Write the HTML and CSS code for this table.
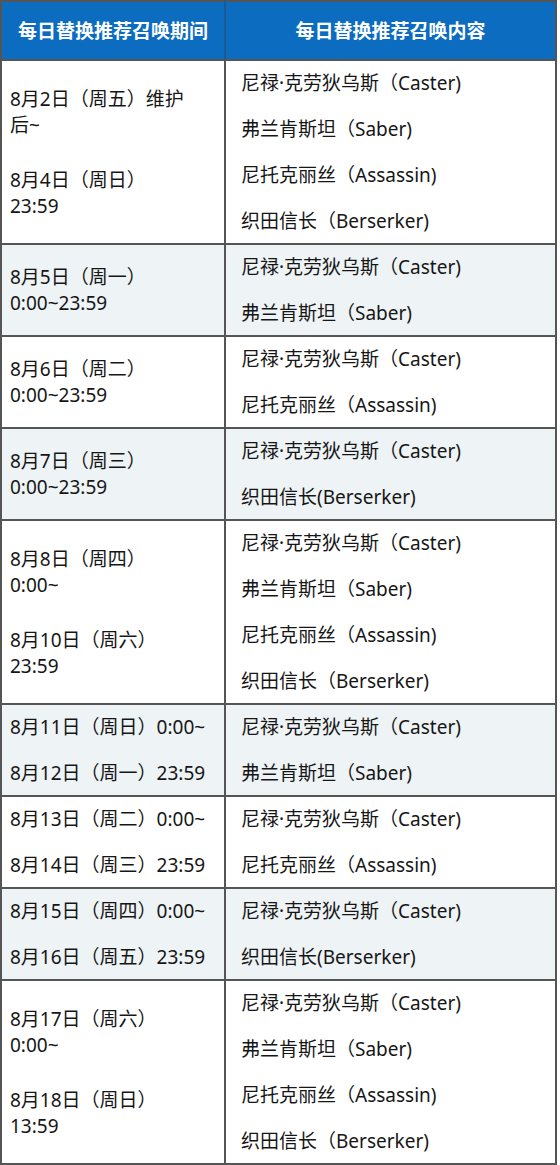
FILE: index.html
```html
<!DOCTYPE html>
<html lang="zh-CN">
<head>
<meta charset="utf-8">
<title>每日替换推荐召唤</title>
<link rel="stylesheet" href="styles.css">
</head>
<body>
<table class="schedule">
  <colgroup><col class="col-date"><col class="col-content"></colgroup>
  <thead>
    <tr><th>每日替换推荐召唤期间</th><th>每日替换推荐召唤内容</th></tr>
  </thead>
  <tbody>
    <tr>
      <td class="date"><p>8月2日（周五）维护<br>后~</p><p class="gap-lg">8月4日（周日）<br>23:59</p></td>
      <td class="items"><p>尼禄·克劳狄乌斯（Caster)</p><p>弗兰肯斯坦（Saber)</p><p>尼托克丽丝（Assassin)</p><p>织田信长（Berserker)</p></td>
    </tr>
    <tr class="alt">
      <td class="date"><p>8月5日（周一）<br>0:00~23:59</p></td>
      <td class="items"><p>尼禄·克劳狄乌斯（Caster)</p><p>弗兰肯斯坦（Saber)</p></td>
    </tr>
    <tr>
      <td class="date"><p>8月6日（周二）<br>0:00~23:59</p></td>
      <td class="items"><p>尼禄·克劳狄乌斯（Caster)</p><p>尼托克丽丝（Assassin)</p></td>
    </tr>
    <tr class="alt">
      <td class="date"><p>8月7日（周三）<br>0:00~23:59</p></td>
      <td class="items"><p>尼禄·克劳狄乌斯（Caster)</p><p>织田信长(Berserker)</p></td>
    </tr>
    <tr>
      <td class="date"><p>8月8日（周四）<br>0:00~</p><p class="gap-lg">8月10日（周六）<br>23:59</p></td>
      <td class="items"><p>尼禄·克劳狄乌斯（Caster)</p><p>弗兰肯斯坦（Saber)</p><p>尼托克丽丝（Assassin)</p><p>织田信长（Berserker)</p></td>
    </tr>
    <tr class="alt">
      <td class="date"><p>8月11日（周日）0:00~</p><p>8月12日（周一）23:59</p></td>
      <td class="items"><p>尼禄·克劳狄乌斯（Caster)</p><p>弗兰肯斯坦（Saber)</p></td>
    </tr>
    <tr>
      <td class="date"><p>8月13日（周二）0:00~</p><p>8月14日（周三）23:59</p></td>
      <td class="items"><p>尼禄·克劳狄乌斯（Caster)</p><p>尼托克丽丝（Assassin)</p></td>
    </tr>
    <tr class="alt">
      <td class="date"><p>8月15日（周四）0:00~</p><p>8月16日（周五）23:59</p></td>
      <td class="items"><p>尼禄·克劳狄乌斯（Caster)</p><p>织田信长(Berserker)</p></td>
    </tr>
    <tr>
      <td class="date"><p>8月17日（周六）<br>0:00~</p><p class="gap-lg">8月18日（周日）<br>13:59</p></td>
      <td class="items"><p>尼禄·克劳狄乌斯（Caster)</p><p>弗兰肯斯坦（Saber)</p><p>尼托克丽丝（Assassin)</p><p>织田信长（Berserker)</p></td>
    </tr>
  </tbody>
</table>
</body>
</html>
```
FILE: styles.css
```css
html, body {
  margin: 0;
  padding: 0;
  background: #ffffff;
}
body {
  font-family: "Noto Sans", "Noto Sans CJK SC", sans-serif;
  font-size: 19px;
  color: #161616;
}
.schedule {
  width: 557px;
  border-collapse: collapse;
  table-layout: fixed;
}
.col-date { width: 224px; }
.schedule th,
.schedule td {
  border: 2px solid #555555;
  padding: 0;
}
.schedule th {
  height: 57px;
  background: #0b6cc0;
  color: #ffffff;
  font-weight: bold;
  font-size: 19px;
  text-align: center;
  vertical-align: middle;
  line-height: 26px;
  border-right-color: #1f5a8f;
}
.schedule th:last-child { border-right-color: #555555; }
.schedule td {
  vertical-align: middle;
  line-height: 26px;
}
.schedule p { margin: 0; white-space: nowrap; }
.schedule .date { padding: 0 4px 0 8px; }
.date p + p { margin-top: 20px; }
.date p.gap-lg { margin-top: 29px; }
.schedule .items { padding: 9px 8px 9px 15px; }
.items p + p { margin-top: 20px; }
.alt td { background: #eef3f5; }
```
